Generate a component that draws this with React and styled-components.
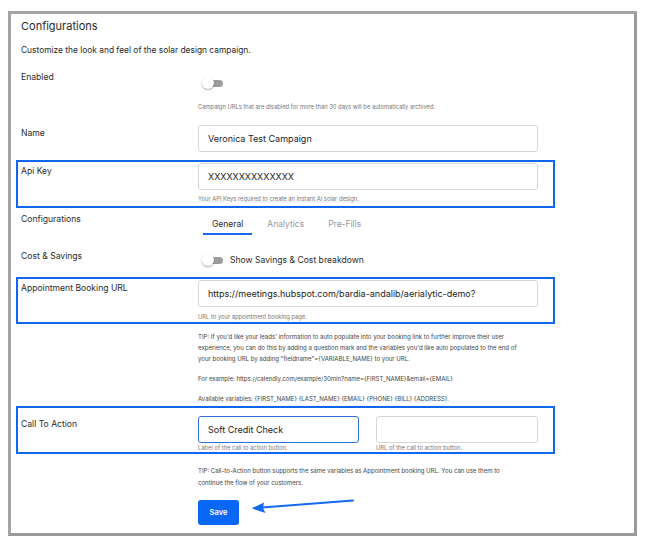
import React from "react";
import styled, { createGlobalStyle } from "styled-components";

const GlobalStyle = createGlobalStyle`
  html, body {
    margin: 0;
    padding: 0;
    background: #fff;
  }
  body {
    font-family: "Inter", "Liberation Sans", sans-serif;
    color: #222;
  }
  * {
    box-sizing: border-box;
  }
`;

const App = () => {
  return (
    <>
      <GlobalStyle />
      <Frame>
        <Title>Configurations</Title>
        <Subtitle>Customize the look and feel of the solar design campaign.</Subtitle>

        <Row $mt={9} $pb={4}>
          <Label>Enabled</Label>
          <Field>
            <ToggleLine $mt={8}>
              <Toggle />
            </ToggleLine>
            <Help $mt={13}>
              Campaign URLs that are disabled for more than 30 days will be
              automatically archived.
            </Help>
          </Field>
        </Row>

        <Row $mt={4} $pb={4}>
          <Label>Name</Label>
          <Field>
            <Input defaultValue="Veronica Test Campaign" />
          </Field>
        </Row>

        <Row $mt={2} $pb={2} $highlight>
          <Label>Api Key</Label>
          <Field>
            <Input defaultValue="XXXXXXXXXXXXXX" />
            <Help $mt={4}>Your API Keys required to create an instant AI solar design.</Help>
          </Field>
        </Row>

        <Row $pb={4}>
          <Label>Configurations</Label>
          <Field>
            <Tabs>
              <Tab $active>General</Tab>
              <Tab>Analytics</Tab>
              <Tab>Pre-Fills</Tab>
            </Tabs>
          </Field>
        </Row>

        <Row $mt={4} $pb={4}>
          <Label>Cost &amp; Savings</Label>
          <Field>
            <ToggleLine $mt={6}>
              <Toggle />
              <ToggleText>Show Savings &amp; Cost breakdown</ToggleText>
            </ToggleLine>
          </Field>
        </Row>

        <Row $mt={5} $pb={0} $highlight>
          <Label>Appointment Booking URL</Label>
          <Field>
            <Input defaultValue="https://meetings.hubspot.com/bardia-andalib/aerialytic-demo?" />
            <Help $mt={5}>URL to your appointment booking page.</Help>
          </Field>
        </Row>

        <Row $mt={4} $pb={0}>
          <Label />
          <Field>
            <Tip>
              TIP: If you'd like your leads' information to auto populate into
              your booking link to further improve their user experience, you
              can do this by adding a question mark and the variables you'd like
              auto populated to the end of your booking URL by adding
              "fieldname"=&#123;VARIABLE_NAME&#125; to your URL.
            </Tip>
            <Tip $mt={9}>
              For example:
              https://calendly.com/example/30min?name=&#123;FIRST_NAME&#125;&amp;email=&#123;EMAIL&#125;
            </Tip>
            <Tip $mt={9}>
              Available variables: &#123;FIRST_NAME&#125; &#123;LAST_NAME&#125;
              &#123;EMAIL&#125; &#123;PHONE&#125; &#123;BILL&#125; &#123;ADDRESS&#125;.
            </Tip>
          </Field>
        </Row>

        <Row $pt={8} $pb={0} $highlight>
          <Label>Call To Action</Label>
          <Field>
            <Pair>
              <div>
                <Input $focused defaultValue="Soft Credit Check" />
                <Help $lh={9}>Label of the call to action button.</Help>
              </div>
              <div>
                <Input defaultValue="" />
                <Help $lh={9}>URL of the call to action button.</Help>
              </div>
            </Pair>
          </Field>
        </Row>

        <Row $mt={8} $pb={0}>
          <Label />
          <Field>
            <Tip $lh={12}>
              TIP: Call-to-Action button supports the same variables as
              Appointment booking URL. You can use them to continue the flow of
              your customers.
            </Tip>
          </Field>
        </Row>

        <Row $mt={6} $pb={0}>
          <Label />
          <Field>
            <SaveButton>Save</SaveButton>
          </Field>
        </Row>

        <Arrow width="130" height="30" viewBox="0 0 130 30">
          <path d="M113 10.5 L22 17.6" stroke="#1769f2" strokeWidth="2" strokeLinecap="round" fill="none" />
          <path d="M11.5 18.3 L24 12.5 L23 18 L25.5 23 Z" fill="#1769f2" />
        </Arrow>
      </Frame>
    </>
  );
};

export default App;

const Frame = styled.div`
  position: relative;
  margin: 11px 0 0 8px;
  width: 629px;
  height: 525px;
  border: 3px solid #a4a4a4;
  border-right-color: #9a9a9a;
  border-bottom-color: #9a9a9a;
  padding: 0 0 0 5px;
  background: #fff;
`;

const Title = styled.div`
  margin-top: 4px;
  padding-left: 5px;
  font-size: 11px;
  line-height: 16px;
  color: #2a2a2a;
`;

const Subtitle = styled.div`
  margin-top: 9px;
  padding-left: 5px;
  font-size: 8.4px;
  line-height: 14px;
  color: #2a2a2a;
`;

const Row = styled.div`
  display: grid;
  grid-template-columns: 177px 340px;
  width: 539px;
  margin-top: ${(p) => p.$mt || 0}px;
  padding: ${(p) => p.$pt ?? 1}px 15px ${(p) => p.$pb ?? 2}px 3px;
  border: 2px solid ${(p) => (p.$highlight ? "#0f66f0" : "transparent")};
`;

const Label = styled.div`
  margin-top: 1px;
  font-size: 8.6px;
  line-height: 14px;
  color: #2a2a2a;
`;

const Field = styled.div`
  display: flex;
  flex-direction: column;
`;

const Input = styled.input`
  display: block;
  width: 100%;
  height: 27px;
  padding: 0 9px;
  border: 1px solid ${(p) => (p.$focused ? "#2f6fe0" : "#d6d6d6")};
  border-radius: 3px;
  font-family: "Inter", "Liberation Sans", sans-serif;
  font-size: 9px;
  color: #222;
  background: #fff;
  outline: none;
`;

const Help = styled.div`
  margin-top: ${(p) => p.$mt || 0}px;
  font-size: 5.8px;
  line-height: ${(p) => p.$lh || 10}px;
  color: #777;
  white-space: nowrap;
`;

const Tip = styled.div`
  width: 328px;
  margin-top: ${(p) => p.$mt || 0}px;
  font-size: 6.05px;
  line-height: ${(p) => p.$lh || 11}px;
  color: #444;
`;

const ToggleLine = styled.div`
  display: flex;
  align-items: center;
  height: 12px;
  margin-top: ${(p) => p.$mt || 0}px;
  padding-left: 4px;
`;

const Toggle = styled.span`
  position: relative;
  width: 21px;
  height: 12px;
  flex: none;

  &::before {
    content: "";
    position: absolute;
    left: 4px;
    top: 3px;
    width: 17px;
    height: 7px;
    border-radius: 4px;
    background: #9c9c9c;
  }

  &::after {
    content: "";
    position: absolute;
    left: 0;
    top: 0;
    width: 12px;
    height: 12px;
    border-radius: 50%;
    background: #fff;
    box-shadow: 0 1px 2px rgba(0, 0, 0, 0.35);
  }
`;

const ToggleText = styled.span`
  margin-left: 7px;
  font-size: 8.6px;
  color: #2a2a2a;
`;

const Tabs = styled.div`
  display: flex;
  gap: 6px;
  margin-left: 5px;
`;

const Tab = styled.div`
  padding: 6px 9px 2px;
  font-size: 8.5px;
  line-height: 14px;
  color: ${(p) => (p.$active ? "#2a2a2a" : "#999")};
  border-bottom: 2px solid ${(p) => (p.$active ? "#1769f2" : "transparent")};
`;

const Pair = styled.div`
  display: grid;
  grid-template-columns: 161px 162px;
  column-gap: 17px;
`;

const SaveButton = styled.button`
  width: 41px;
  height: 25px;
  border: none;
  border-radius: 3px;
  background: #0a66f5;
  color: #fff;
  font-family: "Inter", "Liberation Sans", sans-serif;
  font-size: 7.5px;
  font-weight: 600;
  padding: 0;
`;

const Arrow = styled.svg`
  position: absolute;
  left: 229px;
  top: 476px;
`;
